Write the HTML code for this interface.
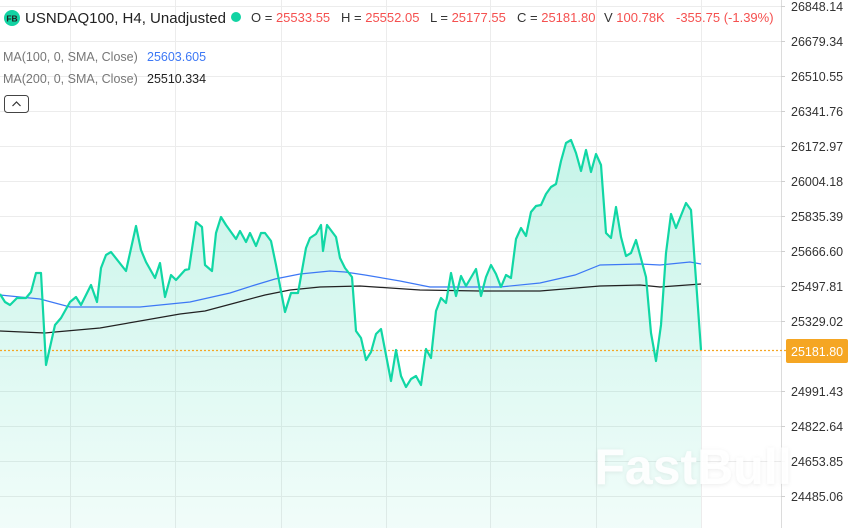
<!DOCTYPE html>
<html><head><meta charset="utf-8"><style>
html,body{margin:0;padding:0;background:#fff;width:853px;height:528px;overflow:hidden;font-family:"Liberation Sans",sans-serif}
</style></head><body>
<svg width="853" height="528" viewBox="0 0 853 528" xmlns="http://www.w3.org/2000/svg" style="position:absolute;left:0;top:0">
<defs>
<linearGradient id="g" x1="0" x2="0" y1="140" y2="528" gradientUnits="userSpaceOnUse">
<stop offset="0" stop-color="#13d3a3" stop-opacity="0.24"/>
<stop offset="1" stop-color="#13d3a3" stop-opacity="0.06"/>
</linearGradient>
<filter id="sh" x="-10%" y="-20%" width="120%" height="140%"><feDropShadow dx="0" dy="1" stdDeviation="2" flood-color="#000" flood-opacity="0.08"/></filter>
</defs>
<g stroke="#ececec" stroke-width="1">
<line x1="0" y1="6.5" x2="781" y2="6.5"/><line x1="0" y1="41.5" x2="781" y2="41.5"/><line x1="0" y1="76.5" x2="781" y2="76.5"/><line x1="0" y1="111.5" x2="781" y2="111.5"/><line x1="0" y1="146.5" x2="781" y2="146.5"/><line x1="0" y1="181.5" x2="781" y2="181.5"/><line x1="0" y1="216.5" x2="781" y2="216.5"/><line x1="0" y1="251.5" x2="781" y2="251.5"/><line x1="0" y1="286.5" x2="781" y2="286.5"/><line x1="0" y1="321.5" x2="781" y2="321.5"/><line x1="0" y1="356.5" x2="781" y2="356.5"/><line x1="0" y1="391.5" x2="781" y2="391.5"/><line x1="0" y1="426.5" x2="781" y2="426.5"/><line x1="0" y1="461.5" x2="781" y2="461.5"/><line x1="0" y1="496.5" x2="781" y2="496.5"/>
<line x1="70.5" y1="0" x2="70.5" y2="528"/><line x1="175.5" y1="0" x2="175.5" y2="528"/><line x1="281.5" y1="0" x2="281.5" y2="528"/><line x1="386.5" y1="0" x2="386.5" y2="528"/><line x1="490.5" y1="0" x2="490.5" y2="528"/><line x1="596.5" y1="0" x2="596.5" y2="528"/><line x1="701.5" y1="0" x2="701.5" y2="528"/>
</g>
<line x1="781.5" y1="0" x2="781.5" y2="528" stroke="#dcdcdc"/>
<g stroke="#cfcfcf"><line x1="781" y1="6.5" x2="785" y2="6.5"/><line x1="781" y1="41.5" x2="785" y2="41.5"/><line x1="781" y1="76.5" x2="785" y2="76.5"/><line x1="781" y1="111.5" x2="785" y2="111.5"/><line x1="781" y1="146.5" x2="785" y2="146.5"/><line x1="781" y1="181.5" x2="785" y2="181.5"/><line x1="781" y1="216.5" x2="785" y2="216.5"/><line x1="781" y1="251.5" x2="785" y2="251.5"/><line x1="781" y1="286.5" x2="785" y2="286.5"/><line x1="781" y1="321.5" x2="785" y2="321.5"/><line x1="781" y1="391.5" x2="785" y2="391.5"/><line x1="781" y1="426.5" x2="785" y2="426.5"/><line x1="781" y1="461.5" x2="785" y2="461.5"/><line x1="781" y1="496.5" x2="785" y2="496.5"/></g>
<path fill="url(#g)" d="M0,294 L5,302 10,305 17,298 26,298 31,292 36,273 41,273 46,365 55,325 61,318 70,302 76,297 81,305 91,285 97,302 101,268 106,255 111,252 126,271 136,226 141,250 146,262 155,278 160,263 165,297 171,275 176,280 185,270 189,269 196,222 202,227 205,265 212,271 216,233 221,217 226,225 236,239 240,231 246,242 250,233 256,246 261,233 265,233 271,241 276,265 285,312 291,293 298,293 306,248 310,238 316,234 321,225 323,251 327,225 336,237 340,258 345,268 352,277 356,331 361,338 366,360 371,352 376,334 381,329 391,381 396,350 401,376 406,387 411,379 416,376 421,385 426,349 431,358 436,311 441,298 446,303 451,273 456,296 461,276 466,286 476,269 481,296 486,277 491,265 496,274 501,287 506,275 511,278 516,239 521,228 526,236 531,212 536,206 541,205 546,194 551,187 556,184 561,161 566,143 571,140 576,153 581,171 586,150 591,172 596,154 601,165 606,233 611,238 616,207 621,237 626,256 631,253 636,240 646,277 651,333 656,361 661,325 666,253 671,214 676,228 686,203 691,210 701,350 L701,528 L0,528 Z"/>
<line x1="0" y1="350.5" x2="786" y2="350.5" stroke="#f5a623" stroke-width="1.2" stroke-dasharray="2,2"/>
<polyline fill="none" stroke="#3d78f5" stroke-width="1.2" points="0,295 40,299 70,307 100,307 140,307 160,305 190,302 230,293 255,285 275,279 300,274 330,271 345,272 365,275 400,281 430,287 450,287 500,287 540,283 575,275 600,265 640,264 660,265 690,262 701,264"/>
<polyline fill="none" stroke="#222" stroke-width="1.2" points="0,331 45,333 55,332 100,328 140,321 180,314 205,311 235,303 265,295 290,290 320,287 360,286 420,290 480,291 540,291 600,286 640,285 660,287 701,284"/>
<polyline fill="none" stroke="#11d7a5" stroke-width="2.2" stroke-linejoin="round" points="0,294 5,302 10,305 17,298 26,298 31,292 36,273 41,273 46,365 55,325 61,318 70,302 76,297 81,305 91,285 97,302 101,268 106,255 111,252 126,271 136,226 141,250 146,262 155,278 160,263 165,297 171,275 176,280 185,270 189,269 196,222 202,227 205,265 212,271 216,233 221,217 226,225 236,239 240,231 246,242 250,233 256,246 261,233 265,233 271,241 276,265 285,312 291,293 298,293 306,248 310,238 316,234 321,225 323,251 327,225 336,237 340,258 345,268 352,277 356,331 361,338 366,360 371,352 376,334 381,329 391,381 396,350 401,376 406,387 411,379 416,376 421,385 426,349 431,358 436,311 441,298 446,303 451,273 456,296 461,276 466,286 476,269 481,296 486,277 491,265 496,274 501,287 506,275 511,278 516,239 521,228 526,236 531,212 536,206 541,205 546,194 551,187 556,184 561,161 566,143 571,140 576,153 581,171 586,150 591,172 596,154 601,165 606,233 611,238 616,207 621,237 626,256 631,253 636,240 646,277 651,333 656,361 661,325 666,253 671,214 676,228 686,203 691,210 701,350"/>
<text x="693" y="484" font-family="Liberation Sans" font-weight="bold" font-size="50" fill="#fff" fill-opacity="0.9" text-anchor="middle" filter="url(#sh)">FastBull</text>
<g font-family="Liberation Sans" font-size="12.5" fill="#333">
<text x="791" y="11">26848.14</text><text x="791" y="46">26679.34</text><text x="791" y="81">26510.55</text><text x="791" y="116">26341.76</text><text x="791" y="151">26172.97</text><text x="791" y="186">26004.18</text><text x="791" y="221">25835.39</text><text x="791" y="256">25666.60</text><text x="791" y="291">25497.81</text><text x="791" y="326">25329.02</text><text x="791" y="396">24991.43</text><text x="791" y="431">24822.64</text><text x="791" y="466">24653.85</text><text x="791" y="501">24485.06</text>
</g>
<rect x="786" y="339" width="62" height="24" rx="2" fill="#f5a623"/>
<text x="791" y="356" font-family="Liberation Sans" font-size="12.5" fill="#fff">25181.80</text>
<circle cx="12" cy="18" r="8" fill="#12d3a3"/>
<text x="12" y="21.5" font-family="Liberation Sans" font-weight="bold" font-size="8.5" fill="#222" text-anchor="middle">FB</text>
<text x="25" y="23" font-family="Liberation Sans" font-size="15" fill="#222">USNDAQ100, H4, Unadjusted</text>
<circle cx="236" cy="17" r="5" fill="#12d3a3"/>
<g font-family="Liberation Sans" font-size="13" fill="#333">
<text x="251" y="22">O = <tspan fill="#f5504f">25533.55</tspan></text>
<text x="341" y="22">H = <tspan fill="#f5504f">25552.05</tspan></text>
<text x="430" y="22">L = <tspan fill="#f5504f">25177.55</tspan></text>
<text x="517" y="22">C = <tspan fill="#f5504f">25181.80</tspan></text>
<text x="604" y="22">V <tspan fill="#f5504f">100.78K</tspan></text>
<text x="676" y="22" fill="#f5504f">-355.75 (-1.39%)</text>
</g>
<g font-family="Liberation Sans" font-size="12.5">
<text x="3" y="61" fill="#777">MA(100, 0, SMA, Close)</text><text x="147" y="61" fill="#3d78f5">25603.605</text>
<text x="3" y="83" fill="#777">MA(200, 0, SMA, Close)</text><text x="147" y="83" fill="#222">25510.334</text>
</g>
<rect x="4.5" y="95.5" width="24" height="17" rx="3" fill="#fff" stroke="#444"/>
<path d="M12.5,106 L16.5,102 L20.5,106" fill="none" stroke="#333" stroke-width="1.2"/>
</svg>
</body></html>
